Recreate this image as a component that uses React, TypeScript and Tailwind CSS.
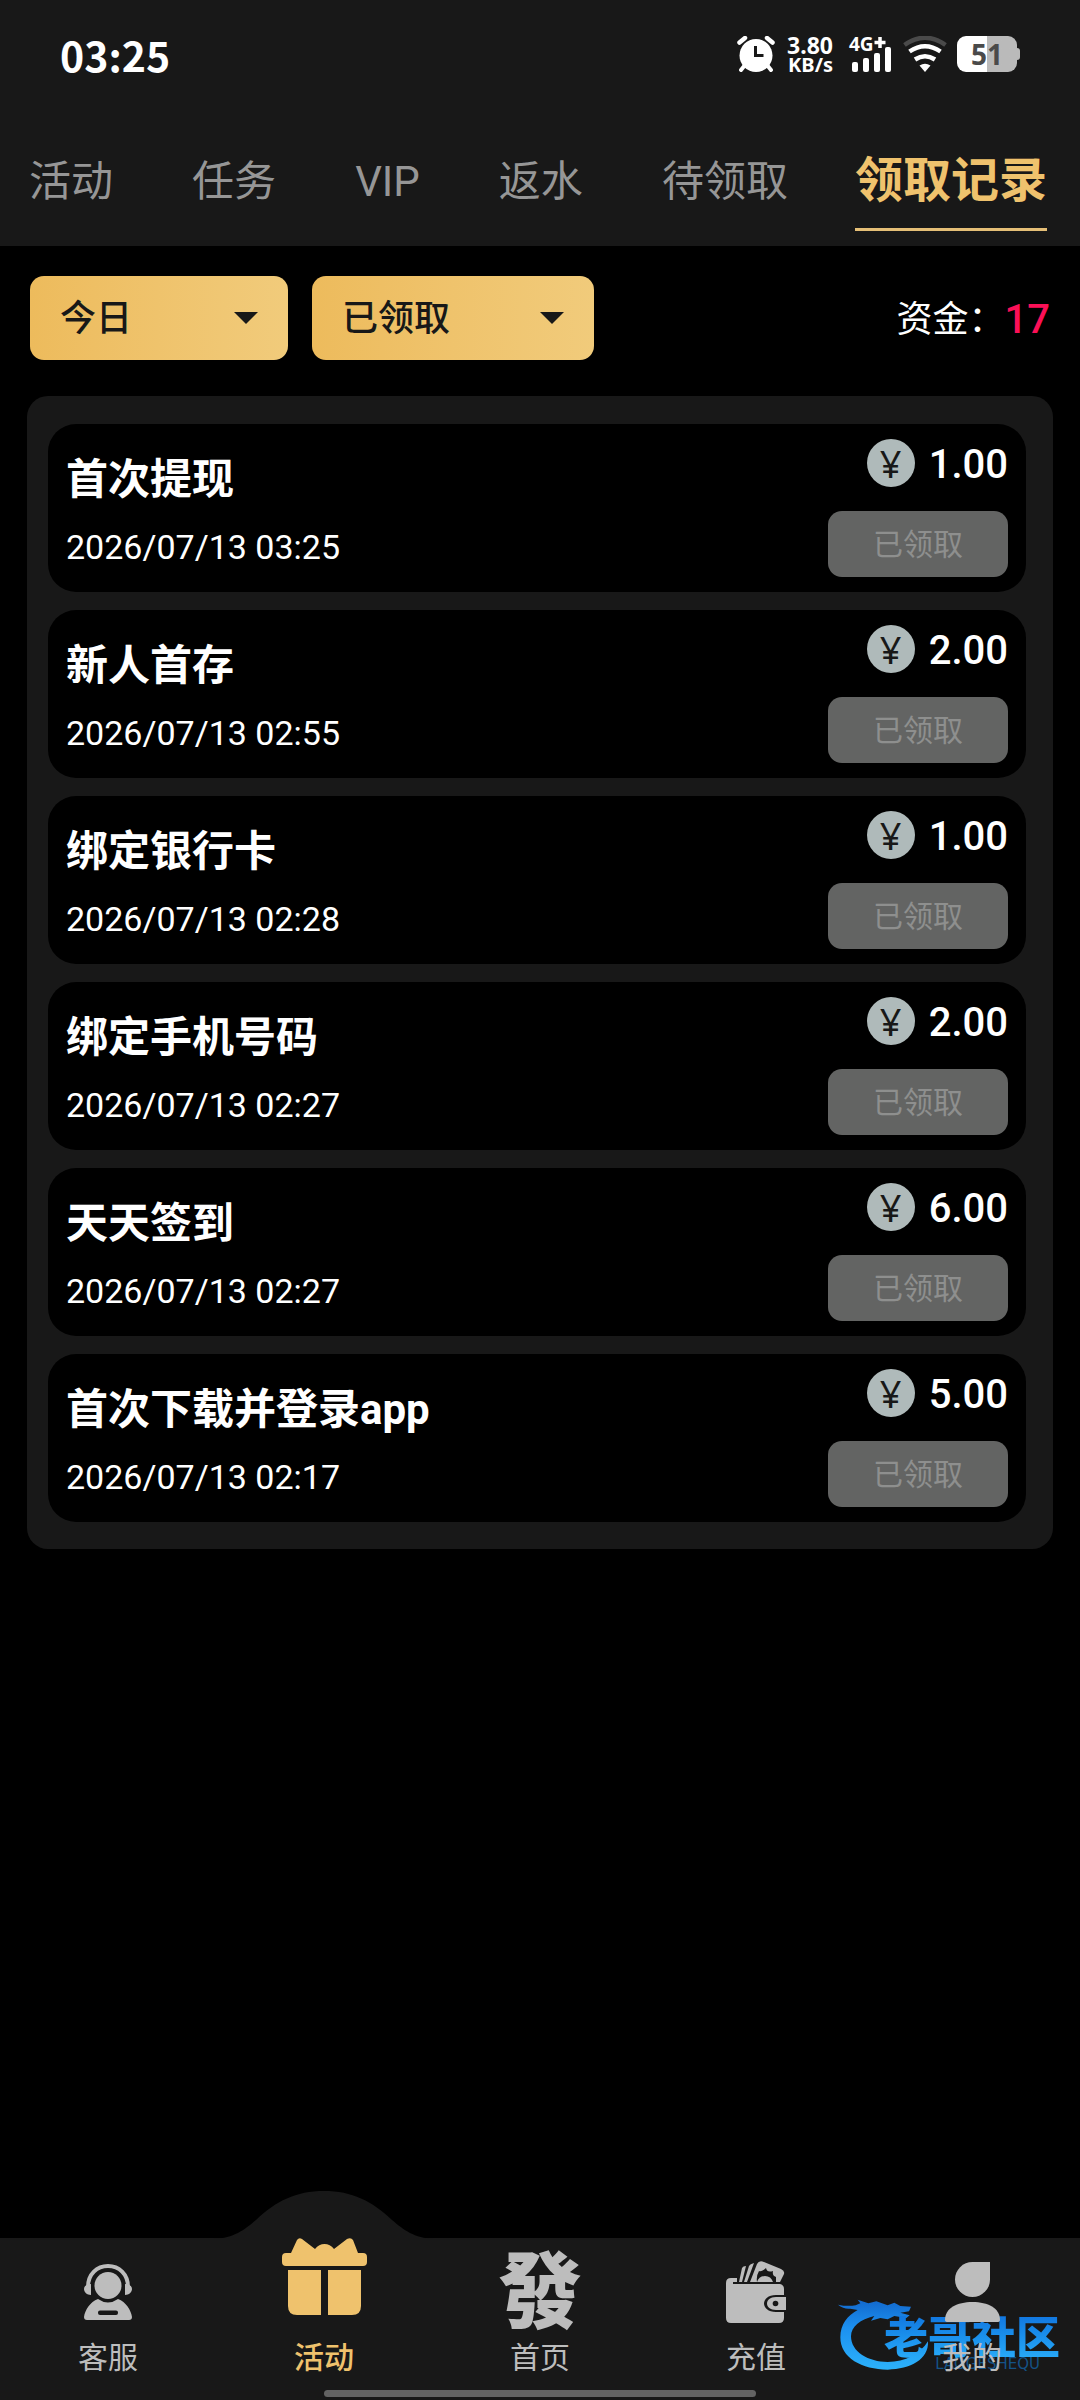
import type { ReactNode } from "react";

const tabs = ["活动", "任务", "VIP", "返水", "待领取"];

const records = [
  { title: "首次提现", time: "2026/07/13 03:25", amount: "1.00" },
  { title: "新人首存", time: "2026/07/13 02:55", amount: "2.00" },
  { title: "绑定银行卡", time: "2026/07/13 02:28", amount: "1.00" },
  { title: "绑定手机号码", time: "2026/07/13 02:27", amount: "2.00" },
  { title: "天天签到", time: "2026/07/13 02:27", amount: "6.00" },
  { title: "首次下载并登录app", time: "2026/07/13 02:17", amount: "5.00" },
];

function StatusBar() {
  return (
    <div className="flex h-9 items-center justify-between px-[60px] text-white">
      <span className="font-['Noto_Sans_CJK_SC',sans-serif] text-[41px] leading-9 font-bold">03:25</span>
      <div className="flex h-9 items-center">
        <svg className="h-9 w-[38px]" viewBox="0 0 38 36" aria-label="闹钟">
          <g stroke="#fff" strokeWidth="4" strokeLinecap="round" fill="none">
            <path d="M2.5 6.500 8 2M35.500 6.500 30 2" strokeWidth="4.500" />
            <path d="M8 29 4 34M30 29l4 5" />
          </g>
          <circle cx="19" cy="19.500" r="16.500" fill="#fff" />
          <path d="M18.500 10v9.500h8" fill="none" stroke="#181818" strokeWidth="3" />
        </svg>
        <div className="ml-2.5 flex w-12 flex-col items-end pt-0.5 font-['Noto_Sans',sans-serif] font-bold">
          <span className="text-[23px] leading-5">3.80</span>
          <span className="text-xl leading-5">KB/s</span>
        </div>
        <div className="relative ml-4 h-9 w-11">
          <span className="absolute -top-1 left-0 font-['Noto_Sans',sans-serif] text-[19px] leading-6 font-bold">4G</span>
          <svg className="h-9 w-11" viewBox="0 0 44 36" aria-label="信号">
            <path d="M31 1v11M25.500 6.500h11" stroke="#fff" strokeWidth="3.500" />
            <g fill="#fff">
              <rect x="3" y="26" width="6" height="10" rx="2" />
              <rect x="14" y="22" width="6" height="14" rx="2" />
              <rect x="25" y="17" width="6" height="19" rx="2" />
              <rect x="36" y="11" width="6" height="25" rx="2" />
            </g>
          </svg>
        </div>
        <svg className="ml-2.5 h-9 w-11" viewBox="0 0 44 36" aria-label="无线网络">
          <g fill="none" strokeWidth="4.500">
            <path d="M1.500 9Q22-5.500 42.500 9" stroke="#4a4a4a" />
            <path d="M6.500 15.500Q22 5 37.500 15.500" stroke="#fff" />
            <path d="M12 23.500Q22 17 32 23.500" stroke="#fff" />
          </g>
          <path d="M16.500 29.500Q22 26 27.500 29.500L22 36z" fill="#fff" />
        </svg>
        <div className="ml-2.5 flex h-9 w-[60px] items-center justify-center rounded-[9px] bg-linear-to-r from-white from-50% to-[#bababa] to-50%">
          <span className="font-['Noto_Sans',sans-serif] text-[28px] leading-9 font-bold text-[#4a4a4a]">51</span>
        </div>
        <span className="h-3 w-[3px] rounded-r-sm bg-[#bababa]" />
      </div>
    </div>
  );
}

function Filter({ label, value, className }: { label: string; value: string; className: string }) {
  return (
    <div className={className}>
      <select
        aria-label={label}
        defaultValue={value}
        className="h-[84px] w-full appearance-none rounded-[14px] bg-linear-to-r from-[#edbb5c] to-[#f1cb7b] px-[30px] pt-0.5 text-4xl leading-10 font-medium text-[#181818]"
      >
        <option>{value}</option>
      </select>
      <svg className="pointer-events-none absolute top-9 right-[30px] h-3 w-6" viewBox="0 0 24 12">
        <path d="M0 0h24L12 12z" fill="#181818" />
      </svg>
    </div>
  );
}

function SupportIcon() {
  return (
    <svg className="h-14 w-12" viewBox="0 0 48 56" fill="#bdbdbd">
      <path d="M4 26V23C4 10 13 2 24 2s20 8 20 21v3" fill="none" stroke="#bdbdbd" strokeWidth="4" />
      <path d="M7 20v11C3 31 0 28 0 25s3-5 7-5zM41 20v11c4 0 7-3 7-6s-3-5-7-5z" />
      <circle cx="24" cy="21.500" r="13.500" />
      <path d="M14 35Q24 42 34 35C42 38 47 46 48 53Q48 56 45 56H3Q0 56 0 53C1 46 6 38 14 35Z" />
      <rect x="14" y="46.500" width="20" height="4.500" rx="2" fill="#181818" />
    </svg>
  );
}

function GiftIcon() {
  return (
    <svg className="h-[77px] w-[85px]" viewBox="0 0 85 77" fill="#efc26d">
      <path d="M4 15H9L15 2Q17-1 20 1L33 11Q37 6 42.500 6T52 11L65 1Q69-1 71 2L76 15H81Q85 15 85 19V24Q85 28 81 28H4Q0 28 0 24V19Q0 15 4 15Z" />
      <path d="M6 32H39V77H15Q6 77 6 68ZM46 32H79V68Q79 77 70 77H46Z" />
    </svg>
  );
}

function WalletIcon() {
  return (
    <svg className="h-[62px] w-[60px]" viewBox="0 0 60 62" fill="#bdbdbd">
      <path d="M5 17H11V21H7V23H54Q58 24 58 28V34H50C34 34 34 51 50 51H58V57Q58 62 53 62H5Q0 62 0 57V22Q0 17 5 17Z" />
      <path d="M13 21 16 7Q17 5 20 5L16 21ZM18 21 23 5Q24 3 28 2L21 21Z" />
      <path d="M24 21 31 3Q33-1 38 1L55 8Q59 10 58 13L54 21H50V16Q46 15 47 10Q41 12 40 7Q36 11 33 10Q30 15 31 21Z" />
      <path d="M31 21Q33 15 39 15T47 21Z" />
      <path d="M60 36H50C38 36 38 49 50 49H60Z" />
      <circle cx="49.500" cy="42.500" r="2.800" fill="#181818" />
    </svg>
  );
}

function UserIcon() {
  return (
    <svg className="h-[60px] w-[55px]" viewBox="0 0 55 60" fill="#bdbdbd">
      <path d="M27.500 0H45V17.500A17.500 17.500 0 1 1 27.500 0Z" />
      <path d="M0 58C0 46 12 40 27.500 40S55 46 55 58Q55 60 52 60H3Q0 60 0 58Z" />
    </svg>
  );
}

function NavItem({ label, active, children }: { label: string; active?: boolean; children: ReactNode }) {
  return (
    <a href="#" className="relative flex flex-1 flex-col items-center">
      <span className="flex h-[102px] items-center justify-center pt-1.5">{children}</span>
      <span className={active ? "text-3xl leading-9 font-medium text-[#efc26d]" : "text-3xl leading-9 text-[#bdbdbd]"}>{label}</span>
    </a>
  );
}

function Watermark() {
  return (
    <div className="absolute right-5 bottom-[18px] h-[78px] w-[222px]">
      <svg className="absolute inset-0 h-[78px] w-[92px]" viewBox="113 228 276 234">
        <defs>
          <linearGradient id="dragon" x1="0" y1="0" x2="0" y2="1">
            <stop offset="0" stopColor="#1268cc" />
            <stop offset="0.4" stopColor="#1c90f0" />
            <stop offset="1" stopColor="#2cb2fb" />
          </linearGradient>
        </defs>
        <path
          fill="url(#dragon)"
          d="M113 260Q140 266 166 262L180 256 172 245 204 256 228 250 262 262 282 254 300 264 332 266 326 280 300 284 328 292 318 300 282 294 262 304 240 300 212 308 222 294C180 304 152 325 152 355C152 402 205 432 262 432C315 432 360 408 383 370C386 425 330 453 262 455C185 455 120 420 120 358C120 318 142 292 172 276L150 272Q130 274 113 260Z"
        />
      </svg>
      <span className="absolute top-[22px] right-0 bg-linear-to-b from-[#1277e0] to-[#2aaefa] bg-clip-text text-[44px] leading-[46px] font-black text-transparent">
        老哥社区
      </span>
      <span className="absolute right-5 bottom-0 font-['DejaVu_Sans',sans-serif] text-[15px] leading-4 text-[#145286]">LAOGESHEQU</span>
    </div>
  );
}

export default function App() {
  return (
    <div className="flex min-h-screen flex-col bg-black font-[Roboto,'Noto_Sans_CJK_SC',sans-serif] text-white">
      <header className="bg-[#181818] pt-9 pb-[15px]">
        <StatusBar />
        <nav className="mt-[60px] flex justify-between pr-[33px] pl-[29px]">
          {tabs.map((tab) => (
            <button key={tab} className="h-[99px] border-b-[3px] border-transparent pt-1 text-[42px] leading-[48px] text-[#969696]">
              {tab}
            </button>
          ))}
          <button className="-ml-3 h-[99px] border-b-[3px] border-[#e5bf77] pt-0.5 text-5xl font-bold text-[#efc26d]">领取记录</button>
        </nav>
      </header>

      <main className="px-[27px] pt-[30px]">
        <div className="flex items-center px-[3px]">
          <Filter label="日期" value="今日" className="relative w-[258px]" />
          <Filter label="状态" value="已领取" className="relative ml-6 w-[282px]" />
          <p className="ml-auto flex items-center pt-1 text-4xl leading-10">
            资金：<span className="text-[40px] font-medium text-[#fb1057]">17</span>
          </p>
        </div>

        <ul className="mt-9 flex flex-col gap-[18px] rounded-[21px] bg-[#181818] pt-7 pr-[27px] pb-[27px] pl-[21px]">
          {records.map((record) => (
            <li key={record.title} className="flex justify-between rounded-[28px] bg-black px-[18px] py-[15px]">
              <div className="flex flex-col justify-between pt-4 pb-2.5">
                <h2 className="text-[42px] leading-[50px] font-bold">{record.title}</h2>
                <time className="text-[34px] leading-10">{record.time}</time>
              </div>
              <div className="flex flex-col items-end gap-6">
                <div className="flex items-center gap-3.5">
                  <span className="flex size-12 items-center justify-center rounded-full bg-[#afbaba] font-['Noto_Sans',sans-serif] text-[38px] leading-[48px] text-[#181818]">
                    ¥
                  </span>
                  <span className="pt-1 text-[40px] leading-[44px] font-medium">{record.amount}</span>
                </div>
                <button disabled className="h-[66px] w-[180px] rounded-[14px] bg-[#636463] pt-0.5 text-3xl leading-9 text-[#8e8f8e]">
                  已领取
                </button>
              </div>
            </li>
          ))}
        </ul>
      </main>

      <footer className="relative mt-auto bg-[#181818] pb-[3px]">
        <nav className="flex h-[152px]">
          <NavItem label="客服">
            <SupportIcon />
          </NavItem>
          <div className="relative flex flex-1">
            <svg className="absolute -top-[47px] left-1/2 h-12 w-[220px] -translate-x-1/2" viewBox="0 0 220 48" fill="#181818">
              <path d="M0 48C20 47 30 39 42 29C62 10 82 0 110 0S158 10 178 29C190 39 200 47 220 48Z" />
            </svg>
            <NavItem label="活动" active>
              <span className="-mt-8">
                <GiftIcon />
              </span>
            </NavItem>
          </div>
          <NavItem label="首页">
            <span className="pt-1 text-[84px] leading-[84px] font-black text-[#bdbdbd]">發</span>
          </NavItem>
          <NavItem label="充值">
            <WalletIcon />
          </NavItem>
          <div className="relative flex flex-1">
            <Watermark />
            <NavItem label="我的">
              <UserIcon />
            </NavItem>
          </div>
        </nav>
        <div className="mx-auto h-[7px] w-2/5 rounded-full bg-[#636363]" />
      </footer>
    </div>
  );
}
